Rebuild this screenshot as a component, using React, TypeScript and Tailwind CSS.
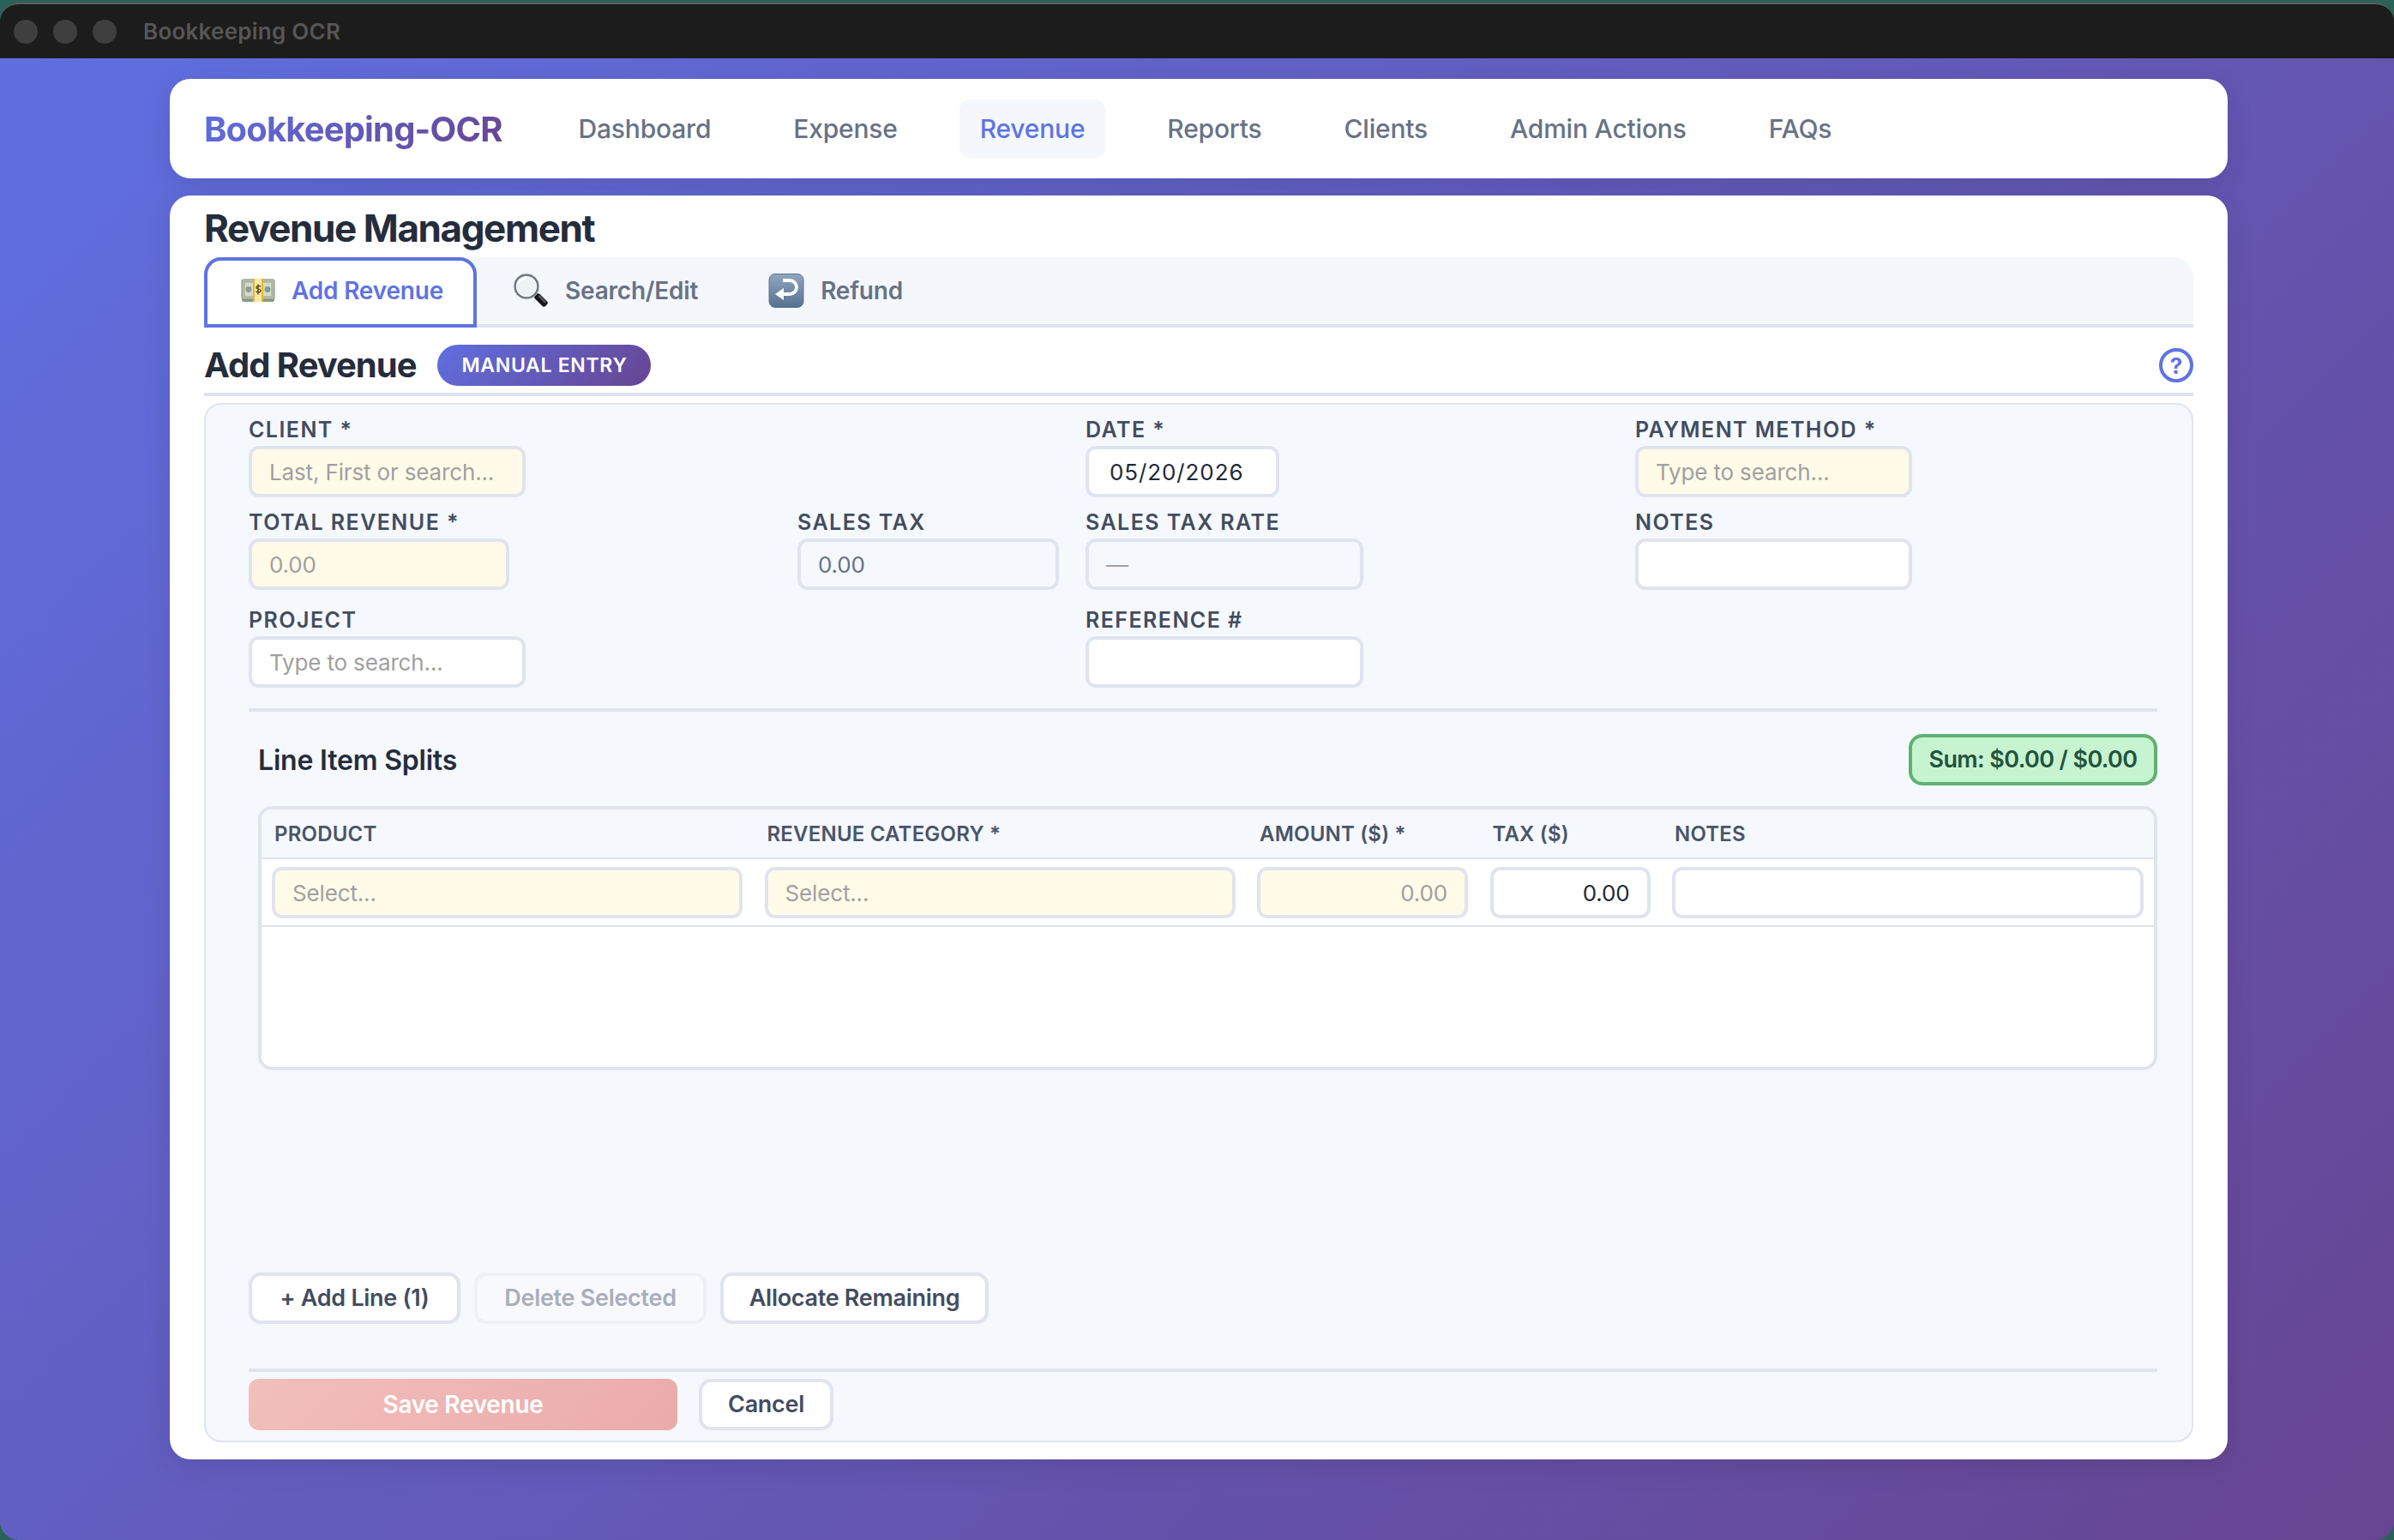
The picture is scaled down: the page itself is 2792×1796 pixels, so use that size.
const Money = () => (
  <svg width="40" height="28" viewBox="0 0 40 28" className="shrink-0">
    <rect x="1" y="2" width="38" height="25" rx="2" fill="#8d9a86" />
    <rect x="1" y="1" width="38" height="23" rx="2" fill="#b9c4b0" stroke="#7f8a78" strokeWidth="1" />
    <rect x="4" y="4" width="32" height="17" fill="#d4dbcc" stroke="#8f9a88" strokeWidth="0.8" />
    <circle cx="9" cy="12.5" r="3.4" fill="#8f9c8a" />
    <circle cx="31" cy="12.5" r="3.4" fill="#7fa08a" />
    <rect x="14" y="0" width="12" height="27" fill="#f8e9a8" />
    <rect x="14" y="0" width="2" height="27" fill="#eab72c" />
    <rect x="24" y="0" width="2" height="27" fill="#eab72c" />
    <path d="M23 9.5c-.6-1.4-4.8-1.8-5 .6-.2 2.6 5 1.4 5 4 0 2.4-4.6 2.2-5.4.6M20 6.5v12" fill="none" stroke="#6b4a12" strokeWidth="1.5" />
  </svg>
);
const Glass = () => (
  <svg width="42" height="42" viewBox="0 0 42 42" className="shrink-0">
    <path d="M24 27l3.5-3.5 4 1.5 9 9c1.6 2-3.4 7-5.4 5.4l-9-9z" fill="#151517" />
    <path d="M31 26l8 8-1.5 1.5-8-8z" fill="#5c5e64" />
    <circle cx="16" cy="16" r="13.5" fill="#eef2f5" stroke="#6a6f75" strokeWidth="2.4" />
    <circle cx="16" cy="16" r="15" fill="none" stroke="#c9d3dc" strokeWidth="1" />
    <path d="M7 12c2-4 6-6 10-5.6" fill="none" stroke="#ffffff" strokeWidth="2.5" />
  </svg>
);
const ReturnIcon = () => (
  <svg width="42" height="40" viewBox="0 0 42 40" className="shrink-0">
    <defs>
      <linearGradient id="rb" x1="0" y1="0" x2="0" y2="1">
        <stop offset="0" stopColor="#8fa6bf" />
        <stop offset="1" stopColor="#56708f" />
      </linearGradient>
    </defs>
    <rect x="1" y="0.5" width="40" height="39" rx="7" fill="url(#rb)" stroke="#5c7591" strokeWidth="1" />
    <path d="M17 8h8a8 8 0 0 1 0 16H16" fill="none" stroke="#ffffff" strokeWidth="3.8" />
    <path d="M18 17v14L8 24z" fill="#ffffff" />
  </svg>
);

const inputBase =
  "block h-[60px] box-border border-4 border-[#e0e4ee] rounded-[12px] text-[26px] tracking-[-0.15px] px-[20px] outline-none placeholder:text-[#a0a0a0] font-[Inter]";

function Field({
  label,
  width,
  placeholder,
  value,
  bg = "bg-white",
  color = "text-[#1f2937]",
  className = "",
  inputClass = "",
}: {
  label: string;
  width: string;
  placeholder?: string;
  value?: string;
  bg?: string;
  color?: string;
  className?: string;
  inputClass?: string;
}) {
  return (
    <div className={className}>
      <div className="h-[40px] text-[25px] leading-[28px] pt-[7px] font-semibold tracking-[1.45px] text-[#434c60] whitespace-nowrap">
        {label}
      </div>
      <input readOnly placeholder={placeholder} value={value ?? ""} className={`${inputBase} ${width} ${bg} ${color} ${inputClass}`} />
    </div>
  );
}

function Btn({ children, className = "", disabled = false }: { children: string; className?: string; disabled?: boolean }) {
  return (
    <button
      disabled={disabled}
      className={`h-[60px] box-border rounded-[14px] border-4 text-[27px] tracking-[-0.3px] font-semibold whitespace-nowrap ${
        disabled ? "border-[#edf0f5] text-[#a9aeba] bg-[#f7f9fc]" : "border-[#e0e4ee] text-[#434c60] bg-white"
      } ${className}`}
    >
      {children}
    </button>
  );
}

export default function App() {
  return (
    <div className="w-[2792px] h-[1796px] overflow-hidden bg-[#2a6259] pt-[3px] font-['Inter',sans-serif]">
      <div className="h-full rounded-[22px] overflow-hidden border-t-2 border-[#5d5d5d] flex flex-col">
        <div className="h-[63px] bg-[#1c1c1c] flex items-center pl-[16px] shrink-0">
          <div className="w-[28px] h-[28px] rounded-full bg-[#3f3f3f]" />
          <div className="w-[28px] h-[28px] rounded-full bg-[#3f3f3f] ml-[18px]" />
          <div className="w-[28px] h-[28px] rounded-full bg-[#3f3f3f] ml-[18px]" />
          <span className="ml-[31px] text-[26px] font-semibold tracking-[0.25px] text-[#565656]">Bookkeeping OCR</span>
        </div>
        <div className="flex-1 bg-[linear-gradient(135deg,#5f6fe0_0%,#674592_100%)] pl-[198px] pr-[194px] pt-[24px]">
          <header className="h-[116px] bg-white rounded-[24px] flex items-center pl-[40px] shadow-[0_8px_32px_rgba(0,0,0,0.1)]">
            <div className="text-[40px] font-bold tracking-[-0.85px] pt-[1px] bg-[linear-gradient(135deg,#5f6fe0_0%,#674592_100%)] bg-clip-text text-transparent">
              Bookkeeping-OCR
            </div>
            <nav className="flex items-center gap-[48px] ml-[65px] text-[30px] font-medium tracking-[-0.2px] text-[#687286]">
              <a className="px-[24px] py-[16px] pt-[17px]">Dashboard</a>
              <a className="px-[24px] py-[16px] pt-[17px]">Expense</a>
              <a className="px-[24px] h-[68px] flex items-center rounded-[12px] bg-[#f4f7fb] text-[#5f73e2]">Revenue</a>
              <a className="px-[24px] py-[16px] pt-[17px]">Reports</a>
              <a className="px-[24px] py-[16px] pt-[17px]">Clients</a>
              <a className="px-[24px] py-[16px] pt-[17px]">Admin Actions</a>
              <a className="px-[24px] py-[16px] pt-[17px]">FAQs</a>
            </nav>
          </header>
          <main className="mt-[20px] h-[1474px] bg-white rounded-[24px] px-[40px] pt-0 shadow-[0_8px_32px_rgba(0,0,0,0.1)]">
            <h1 className="h-[72px] pt-[8px] text-[44px] leading-[60px] font-bold tracking-[-1.4px] text-[#252c3c]">
              Revenue Management
            </h1>
            <div className="h-[82px] box-border flex bg-[#f4f7fb] rounded-t-[24px] border-b-4 border-[#dfe3ed] text-[28px] tracking-[-0.2px] font-semibold text-[#687286]">
              <div className="w-[318px] h-[82px] shrink-0 box-border border-4 border-[#5f73e2] rounded-t-[20px] bg-white text-[#5f73e2] flex items-center pl-[39px] pb-[5px]">
                <Money />
                <span className="ml-[19px]">Add Revenue</span>
              </div>
              <div className="flex items-center pl-[42px] pb-[1px]">
                <Glass />
                <span className="ml-[19px]">Search/Edit</span>
              </div>
              <div className="flex items-center pl-[82px] pb-[1px]">
                <ReturnIcon />
                <span className="ml-[19px]">Refund</span>
              </div>
            </div>
            <div className="h-[80px] box-border border-b-4 border-[#dfe3ed] flex items-center pt-[12px]">
              <h2 className="text-[40px] font-bold tracking-[-1px] text-[#252c3c]">Add Revenue</h2>
              <span className="ml-[25px] h-[48px] w-[249px] rounded-full bg-[linear-gradient(135deg,#5f6fe0_0%,#674592_100%)] text-white text-[23px] font-semibold tracking-[0.7px] flex items-center justify-center">
                MANUAL ENTRY
              </span>
              <span className="ml-auto w-[40px] h-[40px] box-border rounded-full border-4 border-[#5f73e2] text-[#5f73e2] text-[26px] font-bold flex items-center justify-center">
                ?
              </span>
            </div>
            <section className="mt-[8px] h-[1212px] box-border border-2 border-[#e0e4ee] rounded-[20px] bg-[#f5f8fc] pl-[50px] pr-[40px] pt-[8px]">
              <div className="grid grid-cols-[608px_304px_609px_609px] gap-x-[32px] gap-y-[8px]">
                <Field className="col-span-2" label="CLIENT *" width="w-[323px]" bg="bg-[#fffbe8]" placeholder="Last, First or search..." />
                <Field label="DATE *" width="w-[226px]" value="05/20/2026" inputClass="pl-[24px] tracking-[0.9px]" />
                <Field label="PAYMENT METHOD *" width="w-[323px]" bg="bg-[#fffbe8]" placeholder="Type to search..." />
                <Field label="TOTAL REVENUE *" width="w-[304px]" bg="bg-[#fffbe8]" placeholder="0.00" />
                <Field label="SALES TAX" width="w-[305px]" bg="bg-[#f5f8fc]" color="text-[#687286]" value="0.00" />
                <Field label="SALES TAX RATE" width="w-[324px]" bg="bg-[#f5f8fc]" color="text-[#a0a0a0]" value="—" />
                <Field label="NOTES" width="w-[323px]" />
                <Field className="col-span-2 mt-[6px]" label="PROJECT" width="w-[323px]" placeholder="Type to search..." />
                <Field className="mt-[6px]" label="REFERENCE #" width="w-[324px]" />
              </div>
              <div className="mt-[24px] h-[4px] bg-[#e0e4ee]" />
              <div className="mt-[26px] h-[60px] flex items-center justify-between pl-[11px]">
                <h3 className="text-[32px] font-semibold tracking-[-0.2px] pt-[1px] text-[#252c3c]">Line Item Splits</h3>
                <div className="h-[60px] w-[290px] box-border rounded-[16px] border-4 border-[#62b073] bg-[#c6f3d0] text-[#22543d] text-[27px] tracking-[-0.6px] font-semibold flex items-center justify-center whitespace-nowrap pt-[1px]">
                  Sum: $0.00 / $0.00
                </div>
              </div>
              <div className="mt-[24px] ml-[11px] h-[308px] box-border border-4 border-[#e0e4ee] rounded-[16px] bg-white overflow-hidden">
                <div className="h-[58px] box-border border-b-2 border-[#e0e4ee] bg-[#f5f8fc] grid grid-cols-[549px_549px_246px_187px_550px] gap-x-[25.5px] px-[12px] items-center text-[24px] font-semibold tracking-[0.2px] text-[#4a5568]">
                  <div className="pl-[3px] pt-[2px]">PRODUCT</div>
                  <div className="pl-[3px] pt-[2px]">REVENUE CATEGORY *</div>
                  <div className="pl-[3px] pt-[2px]">AMOUNT ($) *</div>
                  <div className="pl-[3px] pt-[2px]">TAX ($)</div>
                  <div className="pl-[3px] pt-[2px]">NOTES</div>
                </div>
                <div className="h-[79px] box-border border-b-2 border-[#e0e4ee] grid grid-cols-[549px_549px_246px_187px_550px] gap-x-[25.5px] px-[12px] pt-[9px]">
                  <input readOnly placeholder="Select..." className={`${inputBase} w-full bg-[#fffbe8]`} />
                  <input readOnly placeholder="Select..." className={`${inputBase} w-full bg-[#fffbe8]`} />
                  <input readOnly placeholder="0.00" className={`${inputBase} w-full bg-[#fffbe8] text-right`} />
                  <input readOnly value="0.00" className={`${inputBase} w-full bg-white text-right text-[#1f2937]`} />
                  <input readOnly value="" className={`${inputBase} w-full bg-white`} />
                </div>
              </div>
              <div className="mt-[236px] flex gap-[17px]">
                <Btn className="w-[247px]">+ Add Line (1)</Btn>
                <Btn className="w-[271px] ml-[-1px]" disabled>
                  Delete Selected
                </Btn>
                <Btn className="w-[313px] ml-[-1px]">Allocate Remaining</Btn>
              </div>
              <div className="mt-[52px] h-[4px] bg-[#e0e4ee]" />
              <div className="mt-[8px] flex gap-[25px]">
                <button className="h-[60px] w-[500px] rounded-[12px] bg-[linear-gradient(135deg,#f2bfbd,#eaabaa)] text-white text-[28px] tracking-[-0.3px] font-semibold">
                  Save Revenue
                </button>
                <Btn className="w-[157px]">Cancel</Btn>
              </div>
            </section>
          </main>
        </div>
      </div>
    </div>
  );
}
